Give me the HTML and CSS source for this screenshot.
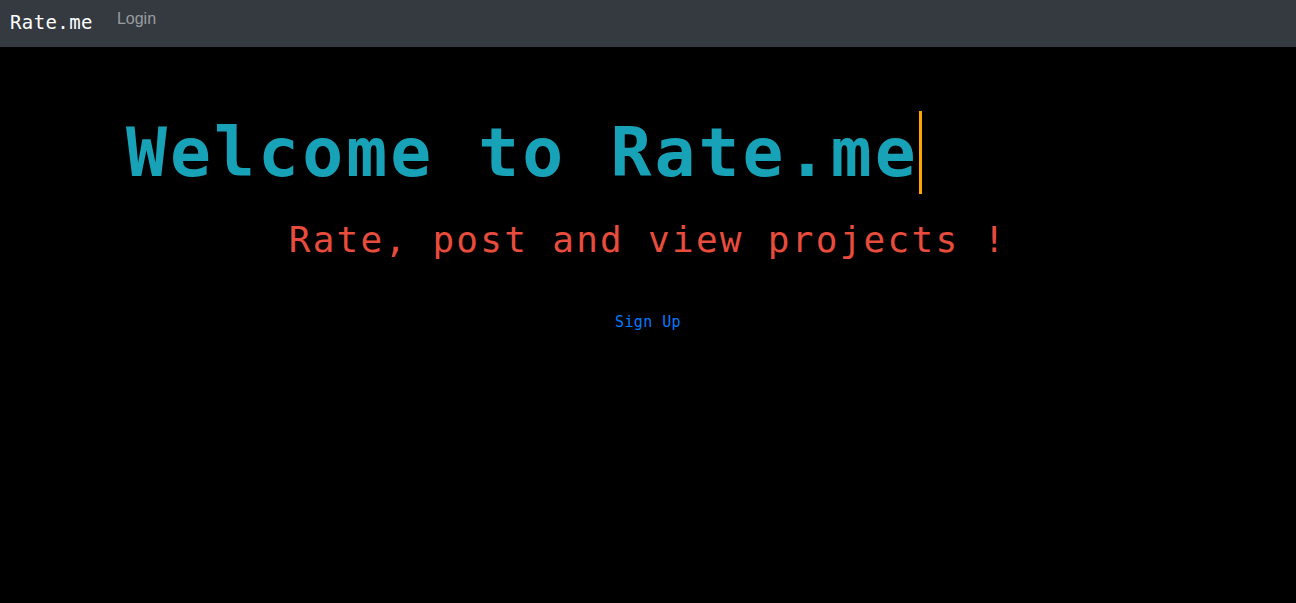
FILE: index.html
```html
<!DOCTYPE html>
<html lang="en">
<head>
<meta charset="utf-8">
<title>Rate.me</title>
<link rel="stylesheet" href="styles.css">
</head>
<body>
<nav class="navbar">
  <a class="brand" href="#">Rate.me</a>
  <a class="nav-link" href="#">Login</a>
</nav>
<main class="hero">
  <div class="title-row">
    <h1 class="typewriter">Welcome to Rate.me</h1>
  </div>
  <p class="tagline">Rate, post and view projects !</p>
  <div class="actions">
    <a class="signup" href="#">Sign Up</a>
  </div>
</main>
</body>
</html>
```

FILE: styles.css
```css
html, body {
  margin: 0;
  padding: 0;
  background: #000;
  height: 100%;
}

body {
  font-family: "DejaVu Sans Mono", "Liberation Mono", monospace;
}

.navbar {
  height: 47px;
  background: #343a40;
  display: flex;
  align-items: center;
  padding: 0 10px;
  box-sizing: border-box;
  gap: 24px;
}

.brand {
  color: #fff;
  text-decoration: none;
  font-family: "DejaVu Sans Mono", monospace;
  font-size: 19px;
  letter-spacing: 0.4px;
  margin-top: -3px;
}

.nav-link {
  color: rgba(255, 255, 255, 0.5);
  text-decoration: none;
  font-family: "Liberation Sans", Arial, sans-serif;
  font-size: 16px;
  margin-top: -10px;
}

.hero {
  padding-top: 64px;
}

.title-row {
  padding-left: 126px;
}

.typewriter {
  display: inline-block;
  margin: 0;
  color: #17a2b8;
  font-size: 68px;
  font-weight: bold;
  letter-spacing: 3.1px;
  line-height: 83px;
  border-right: 3px solid orange;
  white-space: nowrap;
}

.tagline {
  margin: 24px 0 0;
  text-align: center;
  color: #e74c3c;
  font-size: 36px;
  letter-spacing: 2.28px;
  line-height: 44px;
}

.actions {
  text-align: center;
  margin-top: 50px;
}

.signup {
  color: #007bff;
  text-decoration: none;
  font-size: 15px;
  letter-spacing: 0.4px;
}
```
